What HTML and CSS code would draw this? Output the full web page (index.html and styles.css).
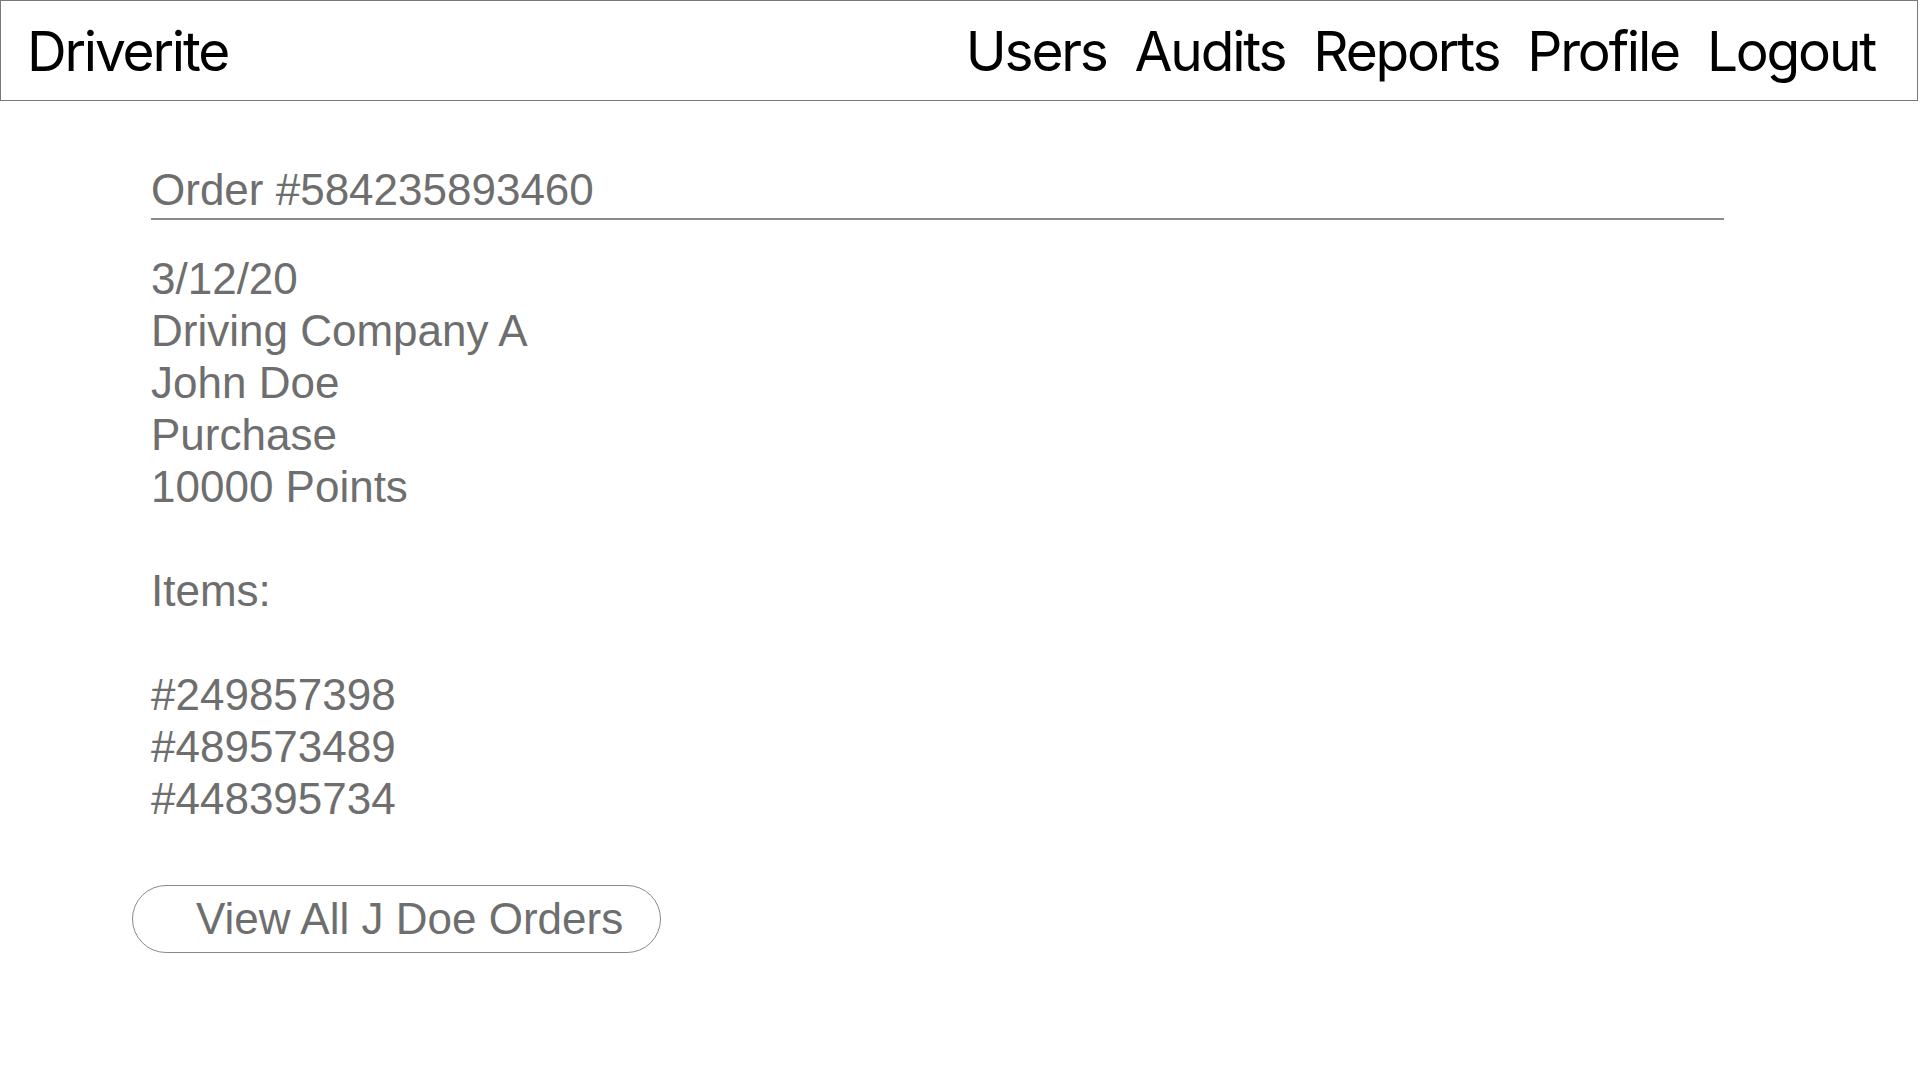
FILE: index.html
```html
<!DOCTYPE html>
<html lang="en">
<head>
<meta charset="utf-8">
<title>Driverite - Order</title>
<link rel="stylesheet" href="styles.css">
</head>
<body>
<header class="topbar">
  <div class="brand">Driverite</div>
  <nav class="nav">
    <a href="#">Users</a>
    <a href="#">Audits</a>
    <a href="#">Reports</a>
    <a href="#">Profile</a>
    <a href="#">Logout</a>
  </nav>
</header>
<main class="content">
  <h1 class="order-title">Order #584235893460</h1>
  <div class="details">
    <div>3/12/20</div>
    <div>Driving Company A</div>
    <div>John Doe</div>
    <div>Purchase</div>
    <div>10000 Points</div>
    <div class="blank"></div>
    <div>Items:</div>
    <div class="blank"></div>
    <div>#249857398</div>
    <div>#489573489</div>
    <div>#448395734</div>
  </div>
  <button class="orders-btn" type="button">View All J Doe Orders</button>
</main>
</body>
</html>
```
FILE: styles.css
```css
html, body {
  margin: 0;
  padding: 0;
  background: #ffffff;
}

.topbar {
  box-sizing: border-box;
  width: 1918px;
  height: 101px;
  border: 1px solid #7a7a7a;
  display: flex;
  align-items: center;
  justify-content: space-between;
  padding: 0 42px 0 26px;
  font-family: Inter, "Noto Sans", sans-serif;
  font-size: 55px;
  color: #000;
}

.brand {
  letter-spacing: -0.04em;
}

.nav {
  display: flex;
  gap: 28px;
  letter-spacing: -0.04em;
}

.nav a {
  color: #000;
  text-decoration: none;
}

.content {
  padding: 63px 0 0 151px;
  font-family: "Liberation Sans", Arial, sans-serif;
  font-size: 44px;
  line-height: 52px;
  color: #6e6e6e;
}

.order-title {
  margin: 0;
  width: 1573px;
  font-size: 44px;
  font-weight: normal;
  line-height: 52px;
  padding-bottom: 2px;
  border-bottom: 2px solid #8a8a8a;
}

.details {
  margin-top: 33px;
}

.blank {
  height: 52px;
}

.orders-btn {
  box-sizing: border-box;
  display: block;
  margin: 60px 0 0 -19px;
  width: 529px;
  height: 68px;
  padding: 0 0 0 63px;
  text-align: left;
  background: #fff;
  border: 1px solid #8a8a8a;
  border-radius: 34px;
  font-family: "Liberation Sans", Arial, sans-serif;
  font-size: 44px;
  color: #6e6e6e;
  cursor: pointer;
}
```
